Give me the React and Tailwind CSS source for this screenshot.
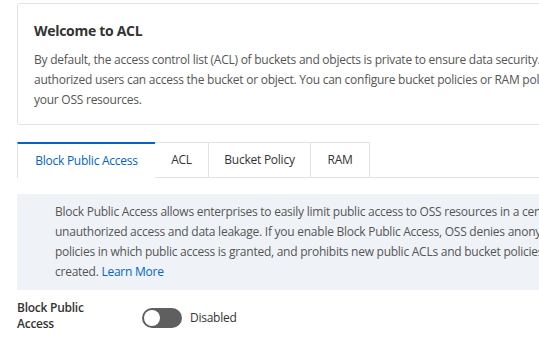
export default function App() {
  const tabs = [
    { label: 'Block Public Access', w: 'w-[138px]', active: true },
    { label: 'ACL', w: 'w-[54px]' },
    { label: 'Bucket Policy', w: 'w-[102px]' },
    { label: 'RAM', w: 'w-[59px]' },
  ];

  return (
    <div className="w-[539px] h-[355px] overflow-hidden bg-white pl-[17px] pt-[3px] text-[12px] tracking-[-0.25px] text-[#555] font-['Open_Sans',sans-serif]">
      {/* Welcome card */}
      <div className="w-[600px] rounded-[3px] border border-[#e3e3e3] pl-4 pt-[17px] pb-[14px]">
        <h2 className="text-[14px] leading-[20px] font-bold tracking-[-0.3px] text-[#333]">Welcome to ACL</h2>
        <div className="mt-[9px] leading-[20px] whitespace-nowrap">
          <p>By default, the access control list (ACL) of buckets and objects is private to ensure data security.</p>
          <p>authorized users can access the bucket or object. You can configure bucket policies or RAM policies to grant</p>
          <p>your OSS resources.</p>
        </div>
      </div>

      {/* Tabs */}
      <div className="mt-[17px] flex h-[36px] w-[600px]">
        {tabs.map((t) =>
          t.active ? (
            <div
              key={t.label}
              className={`${t.w} flex items-center justify-center border-t-2 border-l border-t-[#0064c8] border-l-[#e3e3e3] bg-white text-[#0064c8]`}
            >
              {t.label}
            </div>
          ) : (
            <div
              key={t.label}
              className={`${t.w} flex items-center justify-center border-t border-r border-b border-[#e3e3e3] text-[#333]`}
            >
              {t.label}
            </div>
          )
        )}
        <div className="flex-1 border-b border-[#e3e3e3]" />
      </div>

      {/* Info box */}
      <div className="mt-4 w-[600px] bg-[#eff3f8] pl-[38px] py-2 leading-[20px] whitespace-nowrap">
        <p>Block Public Access allows enterprises to easily limit public access to OSS resources in a centralized manner</p>
        <p>unauthorized access and data leakage. If you enable Block Public Access, OSS denies anonymous access</p>
        <p>policies in which public access is granted, and prohibits new public ACLs and bucket policies from being</p>
        <p>
          created. <span className="text-[#0064c8]">Learn More</span>
        </p>
      </div>

      {/* Setting row */}
      <div className="mt-[10px] flex items-start">
        <div className="w-[125px] leading-[16px] font-semibold text-[#333]">
          Block Public
          <br />
          Access
        </div>
        <button className="relative mt-[8px] h-[20px] w-[40px] rounded-full bg-[#5f5f5f]">
          <span className="absolute left-[2px] top-[2px] h-[16px] w-[16px] rounded-full bg-white" />
        </button>
        <span className="ml-2 mt-[8px] leading-[20px] text-[#333]">Disabled</span>
      </div>
    </div>
  );
}
